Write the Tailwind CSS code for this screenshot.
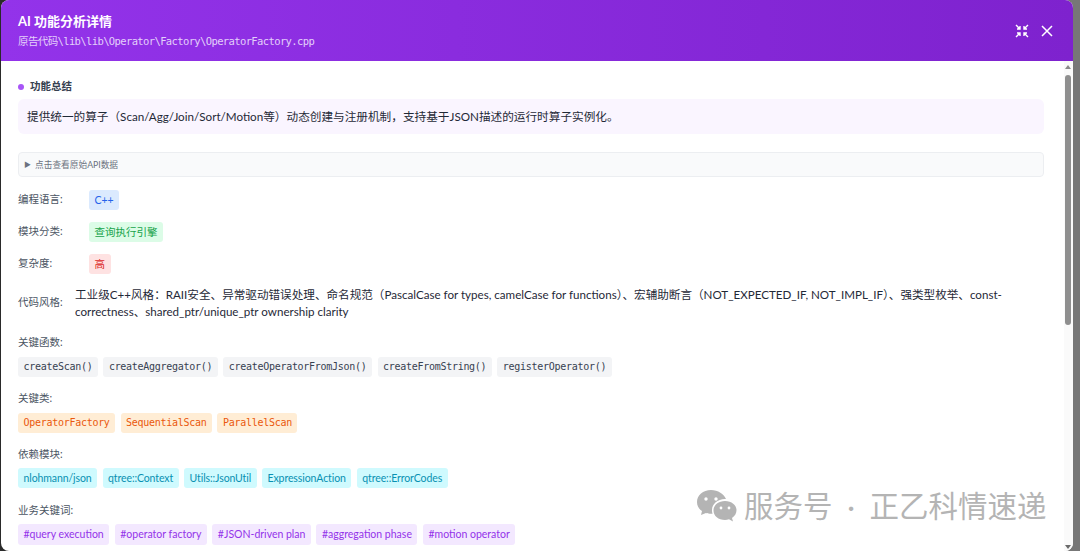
<!DOCTYPE html>
<html lang="zh">
  <head>
    <meta charset="UTF-8" />
    <title>AI 功能分析详情</title>
    <script src="https://cdn.jsdelivr.net/npm/@tailwindcss/browser@4"></script>
  </head>
  <body class="h-[551px] w-[1080px] overflow-hidden bg-[linear-gradient(to_right,#2a2a2a_0,#2a2a2a_30px,#777777_30px)] font-['Lato','Noto_Sans_CJK_SC',sans-serif]">
    <div class="relative flex h-[551px] w-[1072px] ml-px flex-col overflow-hidden rounded-lg bg-white">
      <header class="flex h-[61px] shrink-0 items-center justify-between bg-gradient-to-r from-[#9333ea] to-[#7e22ce] pl-[17px] pr-[19px]">
        <div>
          <h1 class="text-[13px] leading-[16px] font-bold text-white">AI 功能分析详情</h1>
          <p class="mt-[5px] text-[10.5px] leading-[14px] text-[#e3d0fa] font-['DejaVu_Sans_Mono','Noto_Sans_CJK_SC',monospace] tracking-[-0.62px]">原告代码\lib\lib\Operator\Factory\OperatorFactory.cpp</p>
        </div>
        <div class="flex items-center gap-[11px]">
          <svg class="h-[14px] w-[14px]" viewBox="0 0 14 14" fill="none" stroke="white" stroke-width="1.4">
            <path d="M1 1l4 4M5 2v3H2M13 1L9 5M9 2v3h3M1 13l4-4M5 12V9H2M13 13L9 9M9 12V9h3" />
          </svg>
          <svg class="h-[14px] w-[14px]" viewBox="0 0 14 14" fill="none" stroke="white" stroke-width="1.5">
            <path d="M2 2l10 10M12 2L2 12" />
          </svg>
        </div>
      </header>

      <main class="flex-1 pl-[17px] pr-[29px] text-[10.5px] text-[#4b5563]">
        <div class="mt-[19px] flex h-[14px] items-center gap-[6px] font-semibold text-[#374151]">
          <span class="h-[6px] w-[6px] shrink-0 rounded-full bg-[#a855f7]"></span>
          功能总结
        </div>
        <div class="mt-[5px] flex h-[35px] items-center rounded-md bg-[#faf5ff] px-[9px] text-[11.65px] text-[#1f2937]">
          提供统一的算子（Scan/Agg/Join/Sort/Motion等）动态创建与注册机制，支持基于JSON描述的运行时算子实例化。
        </div>
        <div class="mt-[18px] flex h-[25px] items-center gap-[4px] rounded border border-[#eceef1] bg-[#f9fafb] px-[5px] text-[8.7px] text-[#6b7280]">
          <span class="text-[7px]">▶</span> 点击查看原始API数据
        </div>

        <div class="mt-[13px] flex h-[20px] items-center">
          <span class="w-[71px]">编程语言:</span>
          <span class="rounded-[3px] bg-[#dbeafe] px-[5.5px] leading-[20px] text-[#2563eb]">C++</span>
        </div>
        <div class="mt-[12px] flex h-[20px] items-center">
          <span class="w-[71px]">模块分类:</span>
          <span class="rounded-[3px] bg-[#dcfce7] px-[5.5px] leading-[20px] text-[#16a34a]">查询执行引擎</span>
        </div>
        <div class="mt-[12px] flex h-[20px] items-center">
          <span class="w-[71px]">复杂度:</span>
          <span class="rounded-[3px] bg-[#fee2e2] px-[5.5px] leading-[20px] text-[#dc2626]">高</span>
        </div>
        <div class="mt-[12px] flex items-center">
          <span class="w-[57px] shrink-0">代码风格:</span>
          <p class="text-[11.6px] leading-[17px] text-[#1f2937]">工业级C++风格：RAII安全、异常驱动错误处理、命名规范（PascalCase for types, camelCase for functions）、宏辅助断言（NOT_EXPECTED_IF, NOT_IMPL_IF）、强类型枚举、const-correctness、shared_ptr/unique_ptr ownership clarity</p>
        </div>

        <div class="mt-[15px] leading-[14px]">关键函数:</div>
        <div class="mt-[8px] flex gap-[5.5px] font-['DejaVu_Sans_Mono',monospace] text-[10px] leading-[20px] tracking-[-0.28px] text-[#374151]">
          <span class="rounded-[3px] bg-[#f3f4f6] px-[5.5px]">createScan()</span>
          <span class="rounded-[3px] bg-[#f3f4f6] px-[5.5px]">createAggregator()</span>
          <span class="rounded-[3px] bg-[#f3f4f6] px-[5.5px]">createOperatorFromJson()</span>
          <span class="rounded-[3px] bg-[#f3f4f6] px-[5.5px]">createFromString()</span>
          <span class="rounded-[3px] bg-[#f3f4f6] px-[5.5px]">registerOperator()</span>
        </div>

        <div class="mt-[14px] leading-[14px]">关键类:</div>
        <div class="mt-[8px] flex gap-[5.5px] font-['DejaVu_Sans_Mono',monospace] text-[10px] leading-[20px] tracking-[-0.28px] text-[#ea580c]">
          <span class="rounded-[3px] bg-[#ffedd5] px-[5.5px]">OperatorFactory</span>
          <span class="rounded-[3px] bg-[#ffedd5] px-[5.5px]">SequentialScan</span>
          <span class="rounded-[3px] bg-[#ffedd5] px-[5.5px]">ParallelScan</span>
        </div>

        <div class="mt-[14px] leading-[14px]">依赖模块:</div>
        <div class="mt-[7px] flex gap-[5.5px] leading-[20px] tracking-[-0.1px] text-[#0891b2]">
          <span class="rounded-[3px] bg-[#cffafe] px-[5.5px]">nlohmann/json</span>
          <span class="rounded-[3px] bg-[#cffafe] px-[5.5px]">qtree::Context</span>
          <span class="rounded-[3px] bg-[#cffafe] px-[5.5px]">Utils::JsonUtil</span>
          <span class="rounded-[3px] bg-[#cffafe] px-[5.5px]">ExpressionAction</span>
          <span class="rounded-[3px] bg-[#cffafe] px-[5.5px]">qtree::ErrorCodes</span>
        </div>

        <div class="mt-[15px] leading-[14px]">业务关键词:</div>
        <div class="mt-[7px] flex gap-[5.5px] leading-[21px] text-[#9333ea]">
          <span class="rounded-[3px] bg-[#f3e8ff] px-[5.5px]">#query execution</span>
          <span class="rounded-[3px] bg-[#f3e8ff] px-[5.5px]">#operator factory</span>
          <span class="rounded-[3px] bg-[#f3e8ff] px-[5.5px]">#JSON-driven plan</span>
          <span class="rounded-[3px] bg-[#f3e8ff] px-[5.5px]">#aggregation phase</span>
          <span class="rounded-[3px] bg-[#f3e8ff] px-[5.5px]">#motion operator</span>
        </div>
      </main>

      <!-- scrollbar -->
      <div class="absolute right-0 top-[61px] bottom-0 w-[9px] bg-[#fafafa]">
        <div class="absolute left-[1px] top-[4px] h-0 w-0 border-x-[3px] border-b-[4px] border-x-transparent border-b-[#8a8a8a]"></div>
        <div class="absolute left-[1px] top-[14px] h-[250px] w-[6px] rounded-full bg-[#8f8f8f]"></div>
        <div class="absolute left-[1px] bottom-[2px] h-0 w-0 border-x-[3px] border-t-[4px] border-x-transparent border-t-[#6a6a6a]"></div>
      </div>

      <!-- watermark -->
      <div class="absolute left-[695px] top-[485px] flex items-center gap-[7px] text-[29.5px] leading-[42px] text-[#b4b4b4]">
        <svg class="h-[34px] w-[41px]" viewBox="0 0 41 34" fill="#b4b4b4">
          <path d="M15 1C7 1 1 6 1 13c0 4 2 7 5 9l-1 4 5-2c2 .6 3 .8 5 .8 .5 0 1 0 1.500-.1C16 23 16 22 16 21c0-6 5.500-11 13-11h1C28 5 22 1 15 1z" />
          <path d="M29 12c-6.500 0-11.500 4-11.500 9.500S22.500 31 29 31c1.500 0 2.500-.2 4-.7l4 2.200-1-3.500c3-2 4.500-5 4.500-8C40.500 16 35.500 12 29 12z" />
          <g fill="white">
            <circle cx="10" cy="10" r="1.700" /><circle cx="20" cy="10" r="1.700" />
            <circle cx="25" cy="19" r="1.400" /><circle cx="33" cy="19" r="1.400" />
          </g>
        </svg>
        <span class="flex">服务号<span class="w-[37px] text-center">·</span>正乙科情速递</span>
      </div>
    </div>
  </body>
</html>
